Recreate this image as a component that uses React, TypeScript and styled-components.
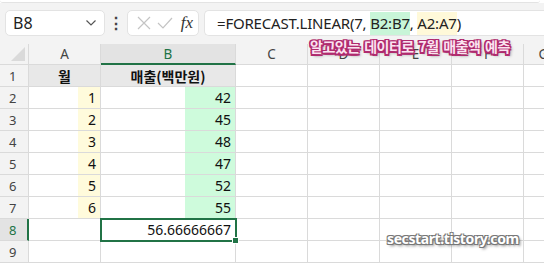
import React from 'react';
import styled, { createGlobalStyle } from 'styled-components';

const GlobalStyle = createGlobalStyle`
  html, body {
    margin: 0;
    padding: 0;
    background: #ffffff;
    font-family: "Noto Sans", "Noto Sans CJK KR", sans-serif;
    overflow: hidden;
  }
`;

const GREEN = '#217346';
const GRID = '#dadada';

const columns = ['A', 'B', 'C', 'D', 'E', 'F', 'G'];
const widths = [72, 135, 72, 72, 72, 72, 40];

const rows: { a: string; b: string }[] = [
  { a: '1', b: '42' },
  { a: '2', b: '45' },
  { a: '3', b: '48' },
  { a: '4', b: '47' },
  { a: '5', b: '52' },
  { a: '6', b: '55' },
];

function App() {
  return (
    <Page>
      <GlobalStyle />
      <RibbonEdge />
      <FormulaBar>
        <NameBox>
          <span>B8</span>
          <svg width="12" height="8" viewBox="0 0 12 8">
            <path d="M1.5 1.5 L6 6 L10.5 1.5" stroke="#555" strokeWidth="1.2" fill="none" />
          </svg>
        </NameBox>
        <Dots>⋮</Dots>
        <FxBox>
          <svg width="14" height="14" viewBox="0 0 14 14">
            <path d="M1 1 L13 13 M13 1 L1 13" stroke="#c4c4c4" strokeWidth="1.2" />
          </svg>
          <svg width="16" height="14" viewBox="0 0 16 14">
            <path d="M1 7 L6 12 L15 2" stroke="#c4c4c4" strokeWidth="1.2" fill="none" />
          </svg>
          <Fx>fx</Fx>
        </FxBox>
        <FormulaInput>
          =FORECAST.LINEAR(7, <Ref $color="#c8f5d8">B2:B7</Ref>, <Ref $color="#fff9d9">A2:A7</Ref>)
        </FormulaInput>
      </FormulaBar>

      <Sheet>
        <Corner>
          <Triangle />
        </Corner>
        {columns.map((c, i) => (
          <ColHead key={c} $active={c === 'B'} style={{ width: widths[i] }}>
            {c}
          </ColHead>
        ))}

        <RowHead>1</RowHead>
        <Cell $head $center>월</Cell>
        <Cell $head $center>매출(백만원)</Cell>
        {columns.slice(2).map((c) => <Cell key={c} />)}

        {rows.map((r, i) => (
          <React.Fragment key={r.a}>
            <RowHead>{i + 2}</RowHead>
            <Cell $tint="#fffbdc" $tintFrom={49}>{r.a}</Cell>
            <Cell $tint="#cefbdc" $tintFrom={84}>{r.b}</Cell>
            {columns.slice(2).map((c) => <Cell key={c} />)}
          </React.Fragment>
        ))}

        <RowHead $active>8</RowHead>
        <Cell />
        <Cell $selected>56.66666667</Cell>
        {columns.slice(2).map((c) => <Cell key={c} />)}

        <RowHead>9</RowHead>
        <Cell />
        <Cell />
        {columns.slice(2).map((c) => <Cell key={c} />)}
      </Sheet>

      <Note>알고있는 데이터로 7월 매출액 예측</Note>
      <Watermark>secstart.tistory.com</Watermark>
    </Page>
  );
}

export default App;

const Page = styled.div`
  position: relative;
  width: 544px;
  height: 269px;
  overflow: hidden;
  background: #ffffff;
`;

const RibbonEdge = styled.div`
  height: 2px;
  background: #ffffff;
  border-bottom: 1px solid #e3e3e3;
  border-radius: 0 0 6px 6px;
  margin: 0 4px 0 0;
`;

const FormulaBar = styled.div`
  height: 41px;
  background: #f3f3f3;
  display: flex;
  align-items: flex-start;
  padding: 7px 0 0 5px;
  box-sizing: border-box;
`;

const Box = styled.div`
  height: 26px;
  box-sizing: border-box;
  background: #ffffff;
  border: 1px solid #e3e3e3;
  border-radius: 5px;
  display: flex;
  align-items: center;
`;

const NameBox = styled(Box)`
  width: 100px;
  padding: 0 7px 0 7px;
  justify-content: space-between;
  font-size: 16px;
  color: #222;
`;

const Dots = styled.div`
  width: 22px;
  text-align: center;
  font-size: 16px;
  line-height: 26px;
  font-weight: 700;
  color: #444;
`;

const FxBox = styled(Box)`
  width: 72px;
  padding: 0 5px 0 9px;
  gap: 6px;
`;

const Fx = styled.span`
  margin-left: auto;
  font-family: "Liberation Serif", "DejaVu Serif", serif;
  font-style: italic;
  font-size: 17px;
  color: #333;
`;

const FormulaInput = styled(Box)`
  flex: 1;
  margin-left: 5px;
  border-right: none;
  border-radius: 5px 0 0 5px;
  padding-left: 12px;
  font-size: 15px;
  letter-spacing: -0.2px;
  color: #222;
  white-space: pre;
`;

const Ref = styled.span<{ $color: string }>`
  background: ${(p) => p.$color};
  line-height: 23px;
`;

const Sheet = styled.div`
  display: grid;
  grid-template-columns: 29px 72px 135px 72px 72px 72px 72px 40px;
  grid-template-rows: 21px;
  grid-auto-rows: 22px;
  font-size: 14px;
  color: #111;
`;

const Corner = styled.div`
  position: relative;
  background: #f3f3f3;
  border-right: 1px solid ${GRID};
  border-bottom: 1px solid ${GRID};
  box-sizing: border-box;
`;

const Triangle = styled.div`
  position: absolute;
  right: 3px;
  bottom: 3px;
  width: 0;
  height: 0;
  border-left: 14px solid transparent;
  border-bottom: 14px solid #dadada;
`;

const ColHead = styled.div<{ $active?: boolean }>`
  background: ${(p) => (p.$active ? '#e3e3e3' : '#f3f3f3')};
  border-right: 1px solid ${GRID};
  border-bottom: ${(p) => (p.$active ? `2px solid ${GREEN}` : `1px solid ${GRID}`)};
  box-sizing: border-box;
  display: flex;
  align-items: center;
  justify-content: center;
  font-size: 13.5px;
  color: ${(p) => (p.$active ? GREEN : '#444')};
  padding-top: ${(p) => (p.$active ? '1px' : '0')};
`;

const RowHead = styled.div<{ $active?: boolean }>`
  background: ${(p) => (p.$active ? '#e3e3e3' : '#f3f3f3')};
  border-right: ${(p) => (p.$active ? `2px solid ${GREEN}` : `1px solid ${GRID}`)};
  border-bottom: 1px solid ${GRID};
  box-sizing: border-box;
  display: flex;
  align-items: center;
  padding-left: 9px;
  font-size: 13px;
  color: ${(p) => (p.$active ? GREEN : '#444')};
`;

const Cell = styled.div<{
  $head?: boolean;
  $center?: boolean;
  $tint?: string;
  $tintFrom?: number;
  $selected?: boolean;
}>`
  position: relative;
  box-sizing: border-box;
  border-right: 1px solid ${GRID};
  border-bottom: 1px solid ${GRID};
  display: flex;
  align-items: center;
  justify-content: ${(p) => (p.$center ? 'center' : 'flex-end')};
  padding: 0 4px;
  font-weight: ${(p) => (p.$head ? 700 : 400)};
  font-family: ${(p) => (p.$head ? '"Noto Sans CJK KR", "Noto Sans", sans-serif' : 'inherit')};
  font-size: 14px;
  background: ${(p) =>
    p.$head
      ? '#e8e8e8'
      : p.$tint
      ? `linear-gradient(to right, transparent ${p.$tintFrom}px, ${p.$tint} ${p.$tintFrom}px)`
      : '#ffffff'};
  ${(p) =>
    p.$selected &&
    `
    outline: 2px solid ${GREEN};
    outline-offset: -1px;
    z-index: 2;
    &::after {
      content: '';
      position: absolute;
      right: -4px;
      bottom: -4px;
      width: 5px;
      height: 5px;
      background: ${GREEN};
      border: 1px solid #fff;
    }
  `}
`;

const Note = styled.div`
  position: absolute;
  left: 310px;
  top: 36px;
  font-family: "Noto Sans CJK KR", sans-serif;
  font-weight: 700;
  font-size: 14px;
  letter-spacing: -0.5px;
  word-spacing: 2px;
  color: #fbe3f0;
  text-shadow:
    -1.5px -1.5px 0 #b02a6e, 1.5px -1.5px 0 #b02a6e, -1.5px 1.5px 0 #b02a6e, 1.5px 1.5px 0 #b02a6e,
    0 -1.5px 0 #b02a6e, 0 1.5px 0 #b02a6e, -1.5px 0 0 #b02a6e, 1.5px 0 0 #b02a6e,
    2px 2px 3px rgba(0, 0, 0, 0.45);
  z-index: 5;
`;

const Watermark = styled.div`
  position: absolute;
  left: 387px;
  top: 229px;
  font-family: "Noto Sans", sans-serif;
  font-weight: 700;
  font-size: 14px;
  letter-spacing: -0.4px;
  color: #ffffff;
  text-shadow:
    -1px -1px 0 #777, 1px -1px 0 #777, -1px 1px 0 #777, 1px 1px 0 #777,
    2px 2px 3px rgba(0, 0, 0, 0.5);
  z-index: 5;
`;
